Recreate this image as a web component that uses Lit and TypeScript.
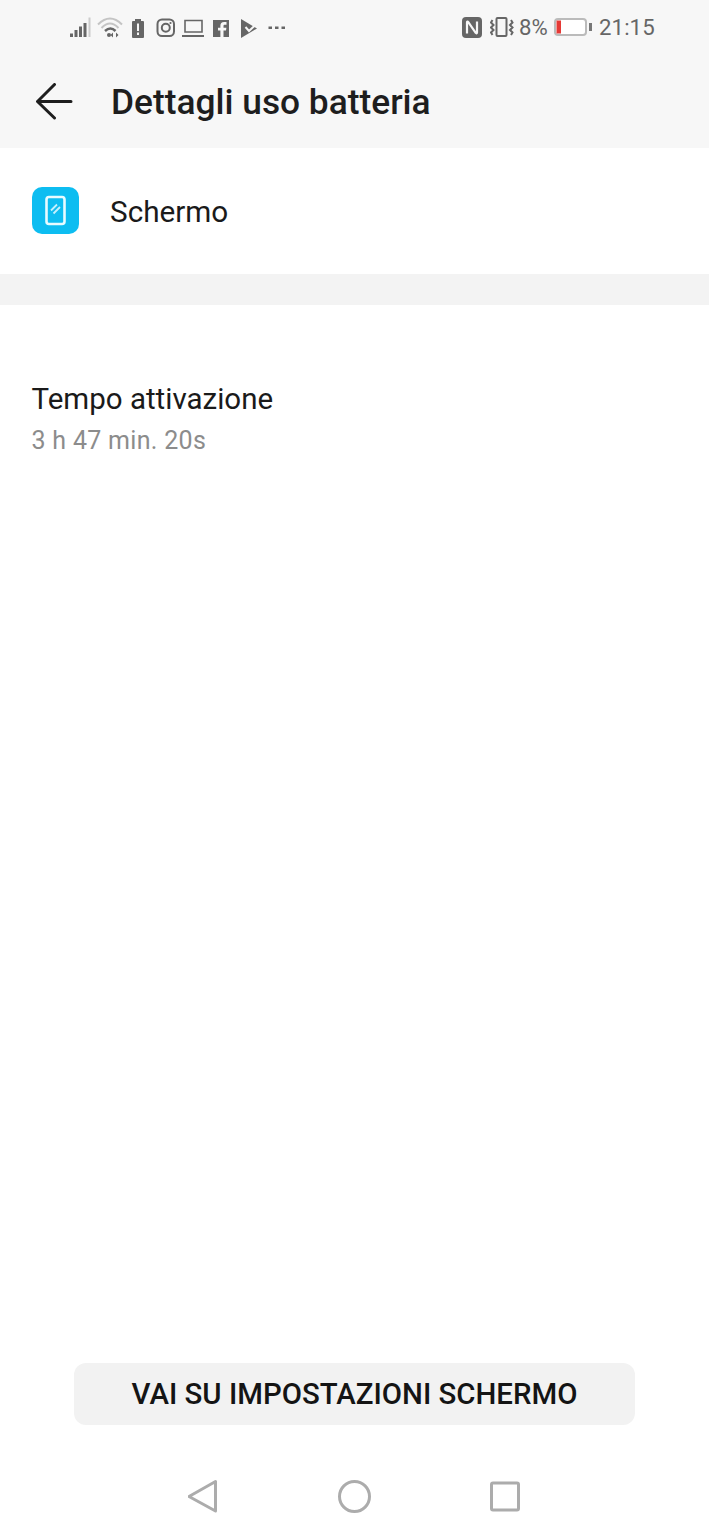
import { LitElement, html, css } from "lit";
import { customElement } from "lit/decorators.js";

@customElement("app-root")
export class AppRoot extends LitElement {
  static styles = css`
    :host { display: block; width: 709px; height: 1536px; background: #fff; font-family: Roboto, "Noto Sans", sans-serif; }
    .page { height: 1536px; display: flex; flex-direction: column; }
    .top { height: 148px; background: #f7f7f7; display: flex; flex-direction: column; flex: none; }
    .status { height: 54px; display: flex; align-items: center; color: #666; padding-left: 70px; }
    .status svg { display: block; flex: none; }
    .left { width: 216px; height: 24px; }
    .right { display: flex; align-items: center; margin-left: 176px; font-size: 22.2px; letter-spacing: 0.1px; }
    .pct { margin-left: 2px; width: 35px; }
    .time { margin-left: 7px; }
    .bar { flex: 1; display: flex; align-items: center; padding-left: 36px; }
    .title { margin-left: 38px; margin-top: 2px; font-size: 35.3px; font-weight: 500; color: #1e1e1e; line-height: 40px; white-space: nowrap; }
    .row { height: 126px; flex: none; display: flex; align-items: center; padding-left: 32px; }
    .app { width: 47px; height: 47px; display: block; margin-top: -1px; }
    .row-label { margin-left: 31px; font-size: 29.7px; color: #1a1a1a; }
    .sep { height: 31px; background: #f3f3f3; flex: none; }
    .info { padding: 76px 0 0 31.500px; flex: 1; }
    .info-title { font-size: 29.5px; line-height: 36px; color: #1a1a1a; }
    .info-sub { font-size: 25px; line-height: 30px; color: #8c8c8c; margin-top: 9px; letter-spacing: 0.3px; }
    .btn-wrap { display: flex; justify-content: center; flex: none; }
    .btn { width: 561px; height: 62px; background: #f2f2f2; border-radius: 12px; border: 0; padding: 0; font: 500 29.4px Roboto, sans-serif; color: #141414; white-space: nowrap; }
    .nav { height: 111px; flex: none; display: flex; justify-content: center; padding-top: 53px; box-sizing: border-box; }
    .nav svg { display: block; }
  `;

  render() {
    return html`<div class="page">
      <div class="top">
        <div class="status">
          <svg class="left" viewBox="70 14 216 24" fill="#666">
            <rect x="70" y="32.500" width="3" height="3.500"/><rect x="74.500" y="29" width="3" height="7"/><rect x="79" y="25.500" width="3" height="10.500"/><rect x="83.500" y="22" width="3" height="14"/>
            <rect x="88.500" y="16.500" width="2" height="19.500" fill="#ccc"/>
            <path d="M98 23.500 Q110 11.500 122 23.500" fill="none" stroke="#c4c4c4" stroke-width="2"/>
            <path d="M101.500 27 Q110 18 118.500 27" fill="none" stroke="#c4c4c4" stroke-width="2"/>
            <path d="M105 30 Q110.500 25 115.500 30" fill="none" stroke="#666" stroke-width="2.500"/>
            <circle cx="109" cy="34" r="2"/><path d="M113 31.500v5l-2.500-2.500zM116 31.500v5l2.500-2.500z"/>
            <path d="M135 18h6v2h2a1 1 0 0 1 1 1v15a1 1 0 0 1-1 1h-10a1 1 0 0 1-1-1v-15a1 1 0 0 1 1-1h2z"/>
            <rect x="137" y="22.500" width="2" height="7.500" fill="#f7f7f7"/><rect x="137" y="31.500" width="2" height="2.500" fill="#f7f7f7"/>
            <rect x="157.500" y="18.500" width="16.500" height="16.500" rx="4.500" fill="none" stroke="#666" stroke-width="2"/>
            <circle cx="165.800" cy="26.800" r="4" fill="none" stroke="#666" stroke-width="2"/><circle cx="170.500" cy="22" r="1.100"/>
            <path d="M185 19.500h17v11.500h-17z" fill="none" stroke="#666" stroke-width="1.600"/><rect x="182" y="34" width="22" height="2"/>
            <path d="M213 19h16v17h-5.500v-6.500h2.500l.4-2.800h-2.900v-1.700c0-.8.300-1.300 1.400-1.300h1.600v-2.600h-2.400c-2.600 0-3.700 1.500-3.700 3.700v1.900h-2.400v2.800h2.400v6.500h-7.400z"/>
            <path d="M241 18L257 27.500L241 37z"/>
            <path d="M245.500 26l3.500 4 8.500-8" fill="none" stroke="#f7f7f7" stroke-width="2"/>
            <rect x="268.500" y="25.500" width="3.500" height="2.500"/><rect x="275" y="25.500" width="3.500" height="2.500"/><rect x="281.500" y="25.500" width="3.500" height="2.500"/>
          </svg>
          <div class="right">
            <svg width="20" height="21" viewBox="0 0 20 21"><rect width="20" height="21" rx="4" fill="#666"/><path d="M5 16.500V5.500c0-1 .8-1 1.300-.4L13.700 15.900c.5.600 1.300.6 1.300-.4V4.500" fill="none" stroke="#f7f7f7" stroke-width="2.200"/></svg>
            <svg style="margin-left:8px" width="27" height="20" viewBox="0 0 27 20" fill="none" stroke="#666" stroke-width="2"><rect x="6.500" y="1" width="10" height="18" rx="1"/><path d="M2.500 3L1 5.500l2.500 2.500L1 10.500 3.500 13 1 15.500 2.500 18M21 3l1.500 2.500L20 8l2.500 2.500L20 13l2.500 2.500L21 18"/></svg>
            <span class="pct">8%</span>
            <svg width="38" height="20" viewBox="0 0 38 20"><rect x="1" y="2" width="31" height="16" rx="3" fill="#fff" stroke="#bbb" stroke-width="2"/><rect x="2.500" y="3.500" width="4.500" height="13" fill="#e53935"/><rect x="35" y="6" width="3" height="8" fill="#777"/></svg>
            <span class="time">21:15</span>
          </div>
        </div>
        <div class="bar">
          <svg width="37" height="37" viewBox="0 0 37 37" fill="none" stroke="#1e1e1e" stroke-width="3" stroke-linecap="round" stroke-linejoin="round"><path d="M35 18.500H2M18.500 1.500L1.500 18.500L18.500 35"/></svg>
          <div class="title">Dettagli uso batteria</div>
        </div>
      </div>
      <div class="row">
        <svg class="app" viewBox="0 0 47 47"><rect width="47" height="47" rx="10" fill="#0dbdf1"/><rect x="14.500" y="10" width="18" height="27" rx="2.500" fill="none" stroke="#e8fbff" stroke-width="2.600"/><path d="M19 23.500l6-6M21.500 26.500l6.500-6.500" stroke="#c5f0fc" stroke-width="1.800"/></svg>
        <span class="row-label">Schermo</span>
      </div>
      <div class="sep"></div>
      <div class="info">
        <div class="info-title">Tempo attivazione</div>
        <div class="info-sub">3 h 47 min. 20s</div>
      </div>
      <div class="btn-wrap"><button class="btn">VAI SU IMPOSTAZIONI SCHERMO</button></div>
      <div class="nav">
        <svg width="334" height="36" viewBox="188 1478 334 36" fill="none" stroke="#acacac" stroke-width="3" stroke-linejoin="round"><path d="M215.500 1481.500V1511L189 1496.500z"/><circle cx="354.500" cy="1496.500" r="15"/><rect x="491.500" y="1483" width="27" height="27" rx="1.500"/></svg>
      </div>
    </div>`;
  }
}
